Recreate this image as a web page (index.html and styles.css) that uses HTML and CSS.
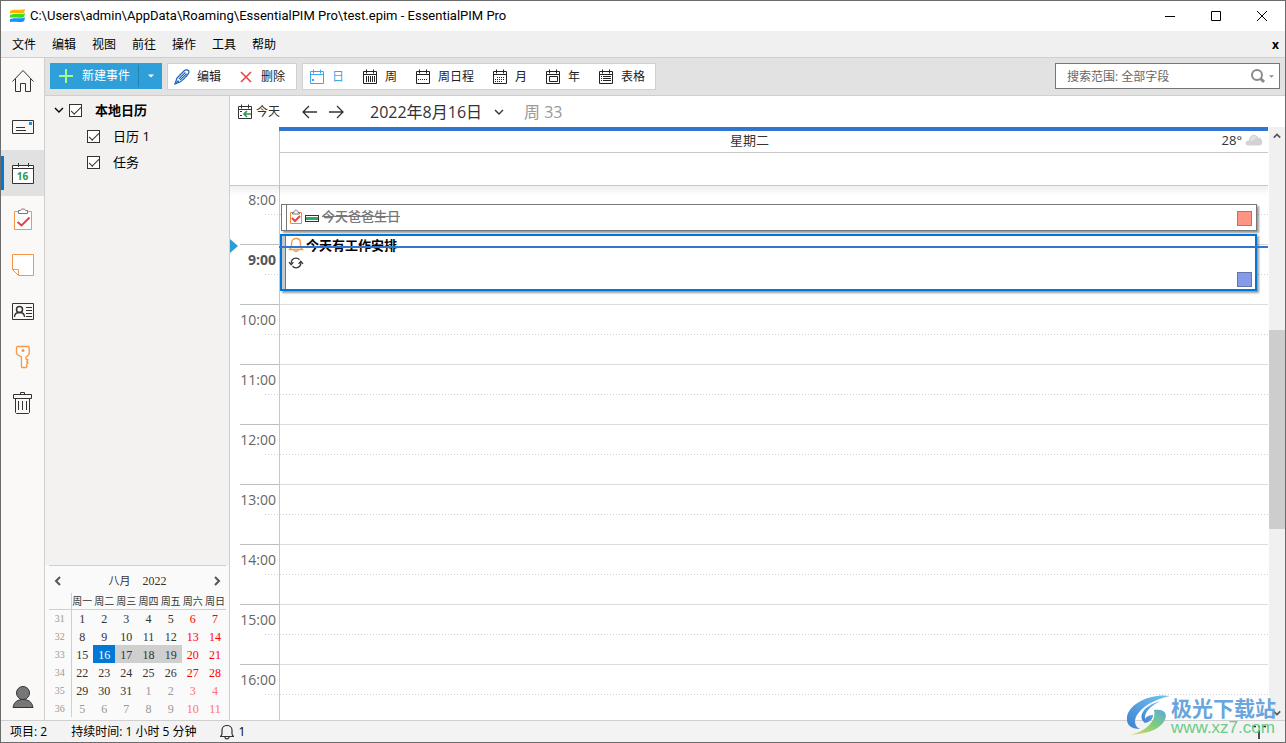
FILE: index.html
```html
<!DOCTYPE html>
<html lang="zh-CN">
<head>
<meta charset="utf-8">
<title>EssentialPIM Pro</title>
<link rel="stylesheet" href="styles.css">
</head>
<body>
<svg class="defs" aria-hidden="true">
  <symbol id="cal" viewBox="0 0 16 16"><path d="M1.500 2.500h13v12h-13zM1.500 5.500h13M4.500 .5v4M11.500 .5v4" fill="none" stroke="currentColor"/></symbol>
  <symbol id="down" viewBox="0 0 10 10"><path d="M1 3l4 4 4-4" fill="none" stroke="currentColor" stroke-width="1.400"/></symbol>
</svg>
<div class="window">
  <header class="titlebar">
    <svg class="logo" viewBox="0 0 18 14"><path d="M1 1.500C6-.5 11 1.500 17-.5l-1 4C11 5.500 6 3.500 1 4.500z" fill="#ffb400"/><path d="M1 6C6 4 11 6 17 4l-1 4C11 10 6 8 1 9z" fill="#3fdc1c"/><path d="M1 10.500C6 8.500 11 10.500 17 8.500l-1 4C11 14.500 6 12.500 1 13.500z" fill="#0a96ff"/></svg>
    <h1 class="title">C:\Users\admin\AppData\Roaming\EssentialPIM Pro\test.epim - EssentialPIM Pro</h1>
    <button class="winbtn" aria-label="最小化"><svg viewBox="0 0 12 12"><path d="M1 6.500h10" stroke="#000"/></svg></button>
    <button class="winbtn" aria-label="最大化"><svg viewBox="0 0 12 12"><path d="M1.500 1.500h9v9h-9z" fill="none" stroke="#000"/></svg></button>
    <button class="winbtn" aria-label="关闭"><svg viewBox="0 0 12 12"><path d="M1 1l10 10M11 1L1 11" stroke="#000"/></svg></button>
  </header>
  <nav class="menubar">
    <button>文件</button><button>编辑</button><button>视图</button><button>前往</button><button>操作</button><button>工具</button><button>帮助</button>
    <button class="menuclose" aria-label="关闭文档">x</button>
  </nav>
  <div class="body">
    <nav class="rail">
      <button aria-label="主页"><svg viewBox="0 0 24 24"><path d="M1.500 12.500L12 1.500l10.500 11M4.500 10v12.500h5v-8h5v8h5V10" fill="none" stroke="#333"/></svg></button>
      <button aria-label="邮件"><svg viewBox="0 0 24 24"><path d="M1.500 5.500h21v13h-21zM5 12.500h9M5 15.500h10" fill="none" stroke="#333"/><path d="M18 7h3v3h-3z" fill="#1f8fe0"/></svg></button>
      <button class="current" aria-label="日历"><svg viewBox="0 0 24 24"><path d="M1.500 4.500h21v18h-21z" fill="#fff" stroke="#333"/><path d="M1.500 7.500h21M7.500 2v4M17.500 2v4" stroke="#333"/></svg><span>16</span></button>
      <button aria-label="任务"><svg viewBox="0 0 24 24"><path d="M3.500 4.500h17v18h-17z" fill="#fff" stroke="#f79646"/><path d="M7.500 6.500v-3h2c0-2 5-2 5 0h2v3z" fill="#fff" stroke="#777"/><path d="M6.500 15l4 3.500 8-8" fill="none" stroke="#ea4040" stroke-width="2"/></svg></button>
      <button aria-label="便笺"><svg viewBox="0 0 24 24"><path d="M1.500 1.500h21v21H7.500l-6-6zM1.500 16.500h6v6" fill="#fff" stroke="#f79646"/></svg></button>
      <button aria-label="联系人"><svg viewBox="0 0 24 24"><path d="M1.500 4.500h21v16h-21zM15 8.500h6M15 11.500h6M15 14.500h6M15 17.500h6" fill="none" stroke="#333"/><path d="M3.500 18c0-3 2-4.500 5-4.500s5 1.500 5 4.500" fill="none" stroke="#333" stroke-width="1.300"/><circle cx="8.500" cy="10.500" r="3" fill="none" stroke="#333" stroke-width="1.500"/></svg></button>
      <button aria-label="密码"><svg viewBox="0 0 24 24"><path d="M6.500 1.500h11l.7 1v6l-1.200 2-2 1.500v2l2 1-1.500 1.500L17 18l-1.500 1.500.5 2-1 1h-4l-.5-1V12L7 10 5.500 8.500v-6z" fill="#fff" stroke="#f79646" stroke-width="1.300"/><circle cx="12" cy="5.500" r="1.500" fill="#f79646"/></svg></button>
      <button aria-label="回收站"><svg viewBox="0 0 24 24"><path d="M2.500 3.500h18v4h-18zM9.500 3.500v-2h4v2M4.500 7.500v14l1 1h12l1-1v-14M7.500 10v9M11.500 10v9M15.500 10v9" fill="none" stroke="#333"/></svg></button>
      <button class="account" aria-label="账户"><svg viewBox="0 0 24 24"><path d="M2 22.500c1-6 5-8 10-8s9 2 10 8z" fill="#777" stroke="#333"/><circle cx="12" cy="8" r="6.500" fill="#777" stroke="#333"/></svg></button>
    </nav>
    <div class="workspace">
      <div class="toolbar">
        <div class="new">
          <button class="newbtn"><svg viewBox="0 0 16 16"><path d="M8 1v14M1 8h14" stroke="#a5ff86" stroke-width="2"/></svg>新建事件</button>
          <button class="newmore" aria-label="更多"><svg viewBox="0 0 8 8"><path d="M1 2.500h6L4 5.500z" fill="#fff"/></svg></button>
        </div>
        <div class="group edit">
          <button><svg viewBox="0 0 16 16"><path d="M1 15l2-6 7-7c2-2 5-1 5 1 0 2-7 9-9 10z" fill="#fff" stroke="#1e66b8" stroke-width="1.300"/><path d="M4.500 9.500L11 3l2 2-6.500 6.500z" fill="#1e66b8"/><path d="M5 11l7-7" stroke="#b5dcff"/><path d="M1 15l3-4 1.500 1.500z" fill="#1e66b8"/></svg>编辑</button>
          <button><svg viewBox="0 0 16 16"><path d="M3 3l10 10M13 3L3 13" stroke="#ea4040" stroke-width="1.500"/></svg>删除</button>
        </div>
        <div class="group views">
          <button class="on"><svg viewBox="0 0 16 16"><use href="#cal"/><path d="M3 10h2v2H3z" fill="currentColor"/></svg>日</button>
          <button><svg viewBox="0 0 16 16"><use href="#cal"/><path d="M4.500 7v6M6.500 7v6M8.500 7v6M10.500 7v6M12.500 7v6" stroke="currentColor"/></svg>周</button>
          <button><svg viewBox="0 0 16 16"><use href="#cal"/><path d="M3 10.500h10" stroke="currentColor" stroke-dasharray="1 1"/></svg>周日程</button>
          <button><svg viewBox="0 0 16 16"><use href="#cal"/><path d="M5 8.500h8M3 10.500h10M3 12.500h8" stroke="currentColor" stroke-dasharray="1 1"/></svg>月</button>
          <button><svg viewBox="0 0 16 16"><use href="#cal"/><path d="M4.500 7.500h8v5h-8z" fill="none" stroke="currentColor"/></svg>年</button>
          <button><svg viewBox="0 0 16 16"><use href="#cal"/><path d="M3 7.500h1M5 7.500h8M3 9.500h1M5 9.500h8M3 11.500h1M5 11.500h8" stroke="currentColor"/></svg>表格</button>
        </div>
        <div class="search">
          <input type="text" aria-label="搜索" placeholder="搜索范围: 全部字段">
          <button aria-label="搜索选项"><svg class="lens" viewBox="0 0 16 16"><circle cx="7" cy="7" r="5" fill="none" stroke="#8a8a8a" stroke-width="2"/><path d="M10.500 10.500L14 14" stroke="#8a8a8a" stroke-width="3"/></svg><svg class="tri" viewBox="0 0 6 6"><path d="M0 1.500h6l-3 3z" fill="#8a8a8a"/></svg></button>
        </div>
      </div>
      <div class="panes">
        <aside class="side">
          <div class="tree">
            <div class="node root"><svg viewBox="0 0 10 10"><use href="#down"/></svg><input type="checkbox" id="c0" checked><label for="c0">本地日历</label></div>
            <div class="node"><input type="checkbox" id="c1" checked><label for="c1">日历 1</label></div>
            <div class="node"><input type="checkbox" id="c2" checked><label for="c2">任务</label></div>
          </div>
          <section class="mini">
            <div class="minihead">
              <button aria-label="上个月"><svg viewBox="0 0 10 10"><path d="M7 1L3 5l4 4" fill="none" stroke="#555" stroke-width="2"/></svg></button>
              <span class="month">八月</span><span>2022</span>
              <button aria-label="下个月"><svg viewBox="0 0 10 10"><path d="M3 1l4 4-4 4" fill="none" stroke="#555" stroke-width="2"/></svg></button>
            </div>
            <table>
              <thead><tr><th></th><th>周一</th><th>周二</th><th>周三</th><th>周四</th><th>周五</th><th>周六</th><th>周日</th></tr></thead>
              <tbody>
                <tr><th>31</th><td>1</td><td>2</td><td>3</td><td>4</td><td>5</td><td class="we">6</td><td class="we">7</td></tr>
                <tr><th>32</th><td>8</td><td>9</td><td>10</td><td>11</td><td>12</td><td class="we">13</td><td class="we">14</td></tr>
                <tr><th>33</th><td>15</td><td class="sel">16</td><td class="range">17</td><td class="range">18</td><td class="range">19</td><td class="we">20</td><td class="we">21</td></tr>
                <tr><th>34</th><td>22</td><td>23</td><td>24</td><td>25</td><td>26</td><td class="we">27</td><td class="we">28</td></tr>
                <tr><th>35</th><td>29</td><td>30</td><td>31</td><td class="out">1</td><td class="out">2</td><td class="we out">3</td><td class="we out">4</td></tr>
                <tr><th>36</th><td class="out">5</td><td class="out">6</td><td class="out">7</td><td class="out">8</td><td class="out">9</td><td class="we out">10</td><td class="we out">11</td></tr>
              </tbody>
            </table>
          </section>
        </aside>
        <main class="main">
          <div class="datenav">
            <button class="today"><svg viewBox="0 0 16 16"><use href="#cal"/><path d="M3 7h2v1H3zM3 11h2v1H3z" fill="currentColor"/><path d="M14 10H7M10 7l-3 3 3 3" fill="none" stroke="#2f9550" stroke-width="1.600"/></svg>今天</button>
            <button class="arrow" aria-label="前一天"><svg viewBox="0 0 16 16"><path d="M15 8H1M7 2L1 8l6 6" fill="none" stroke="#333" stroke-width="1.300"/></svg></button>
            <button class="arrow" aria-label="后一天"><svg viewBox="0 0 16 16"><path d="M1 8h14M9 2l6 6-6 6" fill="none" stroke="#333" stroke-width="1.300"/></svg></button>
            <button class="date">2022年8月16日<svg viewBox="0 0 10 10"><use href="#down"/></svg></button>
            <span class="weekno">周 33</span>
          </div>
          <div class="calendar">
            <div class="day">
              <div class="dayhead"><span class="gutter"></span><div class="headcell"><span class="dayname">星期二</span><span class="weather">28°<svg viewBox="0 0 18 12"><path d="M4 11.500c-5 0-4-5 0-5 0-6 7-8 9-3 5 0 6 8 1 8z" fill="#d2d2d2"/><path d="M5 7c0-5 5-7 7-3-3 0-3 4-7 3z" fill="#e2e2e2"/></svg></span></div></div>
              <div class="hours">
                <div class="hour first"><span>8:00</span><i></i></div>
                <div class="hour now"><span>9:00</span><i></i></div>
                <div class="hour"><span>10:00</span><i></i></div>
                <div class="hour"><span>11:00</span><i></i></div>
                <div class="hour"><span>12:00</span><i></i></div>
                <div class="hour"><span>13:00</span><i></i></div>
                <div class="hour"><span>14:00</span><i></i></div>
                <div class="hour"><span>15:00</span><i></i></div>
                <div class="hour"><span>16:00</span><i></i></div>
                <article class="event done">
                  <svg class="ic" viewBox="0 0 14 16"><path d="M1.500 3.500h11v11h-11z" fill="none" stroke="#f28a36"/><path d="M3.500 5V3.500h1.500c0-3 4-3 4 0h1.500V5z" fill="#fff" stroke="#777"/><path d="M3 9l3 3 5-5" fill="none" stroke="#ea4040" stroke-width="2"/></svg>
                  <span class="prio"></span><b>今天爸爸生日</b><span class="tag red"></span>
                </article>
                <article class="event active">
                  <svg class="ic" viewBox="0 0 14 16"><path d="M.5 12.500l2-2.500V6c0-6 9-6 9 0v4l2 2.500zM5 13c0 2 4 2 4 0" fill="#fff" stroke="#f79646" stroke-width="1.300"/></svg>
                  <b>今天有工作安排</b>
                  <svg class="sync" viewBox="0 0 16 14"><path d="M2.500 8C2 4 4.500 1.500 8 1.500c1.500 0 3 .6 4 1.800M13.500 6c.5 4-2 6.500-5.500 6.500-1.500 0-3-.6-4-1.800" fill="none" stroke="#333" stroke-width="1.400"/><path d="M0 6l2.500 3L5 6M11 8l2.500-3L16 8" fill="none" stroke="#333" stroke-width="1.400"/></svg>
                  <span class="tag blue"></span>
                </article>
                <div class="nowline"></div>
                <svg class="nowmark" viewBox="0 0 8 14"><path d="M0 0l8 7-8 7z" fill="#2f9bd8"/></svg>
              </div>
            </div>
            <div class="scroll">
              <svg viewBox="0 0 10 10"><path d="M1 7l4-4 4 4" fill="none" stroke="#555" stroke-width="2"/></svg>
              <span class="thumb"></span>
              <svg viewBox="0 0 10 10"><path d="M1 3l4 4 4-4" fill="none" stroke="#555" stroke-width="2"/></svg>
            </div>
          </div>
        </main>
      </div>
    </div>
  </div>
  <footer class="status">
    <span class="items">项目: 2</span><span class="duration">持续时间: 1 小时 5 分钟</span>
    <span class="alerts"><svg viewBox="0 0 16 16"><path d="M1 12.500c1 0 2-2 2-3V6c0-6 10-6 10 0v3.500c0 1 1 3 2 3zM6 13c0 2.500 4 2.500 4 0" fill="none" stroke="#333" stroke-width="1.200"/></svg>1</span>
    <svg class="pin" viewBox="0 0 16 16"><path d="M1 2.500h4M7 2.500h2M11 2.500h4M8 6v9" stroke="#222" stroke-width="1.600"/></svg>
  </footer>
  <div class="watermark">
    <svg viewBox="0 0 46 42"><defs><linearGradient id="wb" x1="0" y1="1" x2="1" y2="0"><stop offset="0" stop-color="#3f7fd0"/><stop offset="1" stop-color="#72c6f2"/></linearGradient><linearGradient id="wg" x1="0" y1="1" x2="1" y2="0"><stop offset="0" stop-color="#e5d95f"/><stop offset=".5" stop-color="#83cf76"/><stop offset="1" stop-color="#5ba9dc"/></linearGradient></defs><path d="M45 2C27-1 4 9 2 23c-1 8 4 12 13 12C3 29 13 9 45 2z" fill="url(#wb)"/><path d="M35 7C18 12 12 23 20 29c5-1 8-4 8-8-4 0-6 1-8 4-1-7 6-13 15-18z" fill="url(#wb)"/><path d="M29 16c19-3 14 17-6 22-7 2-13 2-18 3 13-3 27-12 24-25z" fill="url(#wg)"/></svg>
    <div><strong>极光下载站</strong><span>www.xz7.com</span></div>
  </div>
</div>
</body>
</html>
```
FILE: styles.css
```css
* { box-sizing: border-box; }
body {
  margin: 0;
  font: 12px/16px "Open Sans", "Noto Sans CJK SC", sans-serif;
  color: #000;
}
button {
  display: flex;
  align-items: center;
  border: 0;
  padding: 0;
  background: none;
  font: inherit;
  color: inherit;
  white-space: nowrap;
}
svg { flex: none; overflow: visible; }
.defs { position: absolute; width: 0; height: 0; }
.window {
  position: relative;
  display: flex;
  flex-direction: column;
  height: 100vh;
  border: 1px solid #6b6b6b;
  background: #fff;
}

.titlebar { display: flex; align-items: center; flex: none; height: 30px; padding-left: 8px; }
.logo { width: 17px; height: 14px; }
.title { flex: 1; margin: 0 0 0 4px; font: 400 13px/16px Roboto, sans-serif; }
.winbtn { justify-content: center; width: 46px; height: 30px; }
.winbtn svg { width: 12px; height: 12px; }

.menubar { display: flex; align-items: center; flex: none; gap: 16px; height: 27px; padding: 2px 6px 0 11px; background: #f0f0f0; border-bottom: 1px solid #cfcfcf; }
.menuclose { margin-left: auto; font-weight: 700; }

.body { display: flex; flex: 1; min-height: 0; }
.rail { display: flex; flex-direction: column; flex: none; width: 44px; background: #faf9f8; border-right: 1px solid #cfcfcf; }
.rail button { position: relative; justify-content: center; height: 46px; }
.rail svg { width: 24px; height: 24px; }
.rail .current { background: linear-gradient(#0078d4, #0078d4) 0 50% / 3px 34px no-repeat #e1e1e1; }
.rail .current span { position: absolute; left: 0; right: 0; top: 19px; text-align: center; font-size: 10px; line-height: 14px; font-weight: 700; color: #2f9550; }
.rail .account { margin-top: auto; }

.workspace { display: flex; flex-direction: column; flex: 1; min-width: 0; }
.toolbar { display: flex; flex: none; gap: 5px; height: 38px; padding: 5px; background: #e2e2e2; border-bottom: 1px solid #cfcfcf; }
.new { display: flex; height: 26px; background: #2f9fd9; color: #fff; }
.newbtn { width: 88px; padding-left: 8px; gap: 8px; }
.newbtn svg, .group svg { width: 16px; height: 16px; }
.newmore { justify-content: center; width: 24px; height: 22px; margin-top: 2px; border-left: 1px solid #2583b5; }
.newmore svg { width: 8px; height: 8px; }
.group { display: flex; height: 27px; background: #fff; border: 1px solid #d0d0d0; }
.group button { gap: 7px; color: #222; }
.edit { width: 130px; padding-left: 6px; gap: 17px; }
.views { padding: 0 10px 0 6px; gap: 18px; }
.views .on { color: #3ca6e8; }
.search { display: flex; width: 225px; height: 26px; margin-left: auto; background: #fff; border: 1px solid #767676; }
.search input { flex: 1; min-width: 0; border: 0; padding: 1px 0 0 11px; background: none; font: inherit; }
.search input::placeholder { color: #666; opacity: 1; }
.search button { gap: 3px; padding-right: 5px; }
.lens { width: 16px; height: 16px; }
.tri { width: 5px; height: 5px; }

.panes { display: flex; flex: 1; min-height: 0; }
.side { display: flex; flex-direction: column; flex: none; width: 185px; background: #f3f2f1; border-right: 1px solid #cfcfcf; }
.tree { flex: 1; padding-top: 1px; font-size: 13px; }
.node { display: flex; align-items: center; height: 26px; padding-left: 42px; }
.node label { margin-left: 13px; }
.root { padding-left: 9px; font-weight: 700; }
.root svg { width: 10px; height: 10px; margin-right: 5px; }
.node input { appearance: none; width: 13px; height: 13px; margin: 0; border: 1px solid #333; background: #fff; display: grid; place-items: center; }
.node input:checked::after { content: ""; width: 9px; height: 4px; border: solid #333; border-width: 0 0 1px 1px; transform: rotate(-45deg); margin-bottom: 2px; }

.mini { flex: none; padding: 0 3px 3px 4px; background: #fafafa; font-family: "Liberation Serif", "Noto Sans CJK SC", serif; color: #333; }
.minihead { display: flex; align-items: center; height: 28px; gap: 12px; border-top: 1px solid #cfcfcf; padding: 3px 4px 0; }
.month { font-size: 11px; }
.minihead button:first-child { margin-right: auto; }
.minihead button:last-child { margin-left: auto; }
.minihead svg { width: 10px; height: 10px; }
.mini table { width: 100%; border-collapse: collapse; table-layout: fixed; text-align: center; }
.mini td, .mini th { height: 18px; padding: 1px 0 0; line-height: 16px; font-weight: 400; }
.mini th:first-child { width: 22px; font-size: 10px; color: #999; border-right: 1px solid #cfcfcf; }
.mini thead th { height: 16px; padding-top: 3px; line-height: 12px; font-size: 10px; white-space: nowrap; border-bottom: 1px solid #cfcfcf; }
.mini .we { color: #f00; }
.mini .out { color: #999; }
.mini .we.out { color: #ff7373; }
.mini .range { background: #cfcfcf; }
.mini .sel { background: #0078d7; color: #fff; }

.main { display: flex; flex-direction: column; flex: 1; min-width: 0; }
.datenav { display: flex; align-items: center; flex: none; height: 31px; padding-left: 7px; color: #333; }
.today { gap: 3px; margin-right: 22px; }
.today svg, .arrow svg { width: 16px; height: 16px; }
.arrow { margin-right: 10px; }
.date { gap: 12px; margin-left: 16px; font-size: 16px; }
.date svg { width: 10px; height: 10px; }
.weekno { margin-left: 20px; font-size: 16px; color: #999; }

.calendar { display: flex; flex: 1; min-height: 0; }
.day { display: flex; flex-direction: column; flex: 1; min-width: 0; background: linear-gradient(#c8c8c8, #c8c8c8) 49px 4px / 1px 100% no-repeat; }
.dayhead { display: flex; flex: none; height: 59px; border-bottom: 1px solid #c8c8c8; }
.gutter { width: 49px; }
.headcell { flex: 1; display: grid; grid-template-columns: 1fr auto 1fr; align-items: center; height: 26px; border-top: 4px solid #3175d0; border-bottom: 1px solid #c8c8c8; padding-bottom: 3px; font-size: 13px; color: #333; }
.dayname { grid-column: 2; margin-right: 48px; }
.weather { display: flex; align-items: center; justify-self: end; gap: 3px; padding-right: 5px; }
.weather svg { width: 18px; height: 12px; }
.hours { position: relative; flex: 1; min-height: 0; overflow: hidden; }
.hours::before { content: ""; position: absolute; inset: 0 0 auto 0; height: 10px; background: linear-gradient(rgb(0 0 0 / 6%), transparent); }
.hour {
  height: 60px;
  padding-top: 7px;
  background:
    linear-gradient(#bdbdbd, #bdbdbd) 10px 0 / 39px 1px no-repeat,
    linear-gradient(#dcdcdc, #dcdcdc) 50px 0 / 100% 1px no-repeat;
  color: #666;
  font-size: 14px;
  line-height: 18px;
}
.hour span { display: block; width: 46px; text-align: right; }
.hour i { display: block; height: 1px; margin: 5px 0 0 35px; background: repeating-linear-gradient(90deg, #d0d0d0 0 1px, transparent 1px 3px); }
.hour.first { height: 58px; padding-top: 5px; background: none; }
.now span { font-weight: 700; color: #555; }

.event { position: absolute; left: 51px; right: 11px; display: flex; align-items: center; background: linear-gradient(#777, #777) 4px 0 / 1px 100% no-repeat #fff; border: 1px solid #777; box-shadow: 2px 2px 2px rgb(0 0 0 / 40%); font-size: 13px; }
.ic { width: 14px; height: 16px; }
.done { top: 18px; height: 27px; padding: 0 4px 3px 7px; color: #777; }
.done .ic { margin-top: 2px; }
.done b { font-weight: 500; text-decoration: line-through; }
.prio { width: 14px; height: 7px; margin: 4px 3px 0 2px; border: 1px solid #333; background: linear-gradient(#27ae60, #27ae60) center / 100% 3px no-repeat #fff; }
.tag { width: 15px; height: 15px; margin-left: auto; border: 1px solid #b9726a; background: #ff9384; }
.done .tag { margin-top: 4px; }
.active { left: 50px; top: 48px; height: 57px; display: grid; grid-template-columns: 14px 1fr 15px; grid-template-rows: 18px 18px 1fr; column-gap: 3px; padding: 0 3px 3px 7px; border: 2px solid #0078d7; background: linear-gradient(#c8c8c8, #c8c8c8) 0 0 / 3px 100% no-repeat, linear-gradient(#777, #777) 3px 0 / 1px 100% no-repeat, #fff; }
.active b { grid-column: 2; line-height: 20px; }
.sync { grid-row: 2; grid-column: 1; width: 14px; height: 14px; }
.tag.blue { grid-row: 3; grid-column: 3; align-self: end; border-color: #6674ad; background: #869be8; }
.nowline { position: absolute; left: 49px; right: 0; top: 60px; height: 2px; background: #3175d0; }
.nowmark { position: absolute; left: 0; top: 53px; width: 8px; height: 14px; }

.scroll { display: flex; flex-direction: column; align-items: center; flex: none; width: 16px; margin-left: 1px; padding: 5px 0 3px; background: #f0f0f0; }
.scroll svg { width: 8px; height: 8px; }
.thumb { width: 100%; height: 34%; margin: 190px 0 auto; background: #cdcdcd; }

.status { display: flex; align-items: center; flex: none; height: 22px; padding: 0 18px 0 9px; background: #f3f3f3; border-top: 1px solid #cfcfcf; }
.duration { margin-left: 24px; }
.alerts { display: flex; align-items: center; gap: 4px; margin-left: 22px; }
.alerts svg { width: 16px; height: 16px; }
.pin { width: 16px; height: 16px; margin-left: auto; }

.watermark { position: absolute; right: 9px; bottom: 6px; display: flex; align-items: flex-end; gap: 0; }
.watermark svg { width: 46px; height: 42px; }
.watermark div { display: flex; flex-direction: column; }
.watermark strong { font: 700 21px/26px "Noto Sans CJK SC", sans-serif; color: #6aa5dd; }
.watermark span { font: 500 17px/16px "Liberation Sans", sans-serif; color: #6ccb84; }
```
